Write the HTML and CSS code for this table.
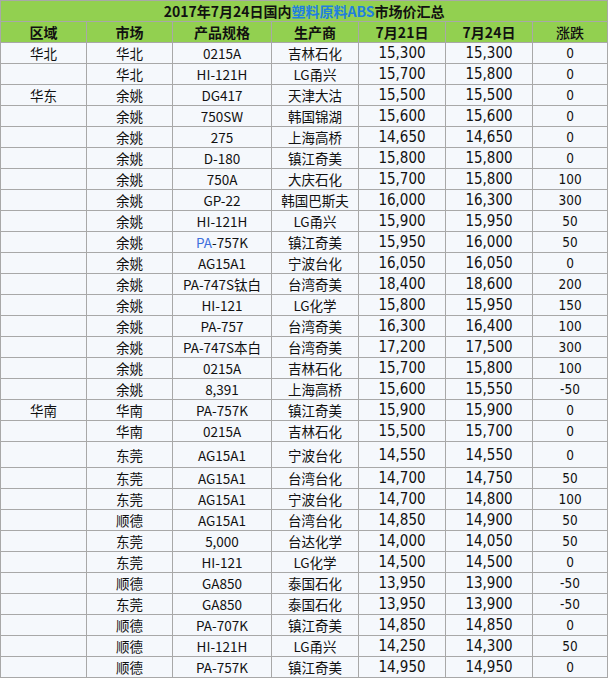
FILE: index.html
```html
<!DOCTYPE html>
<html lang="zh-CN">
<head>
<meta charset="utf-8">
<title>2017年7月24日国内塑料原料ABS市场价汇总</title>
<link rel="stylesheet" href="styles.css">
</head>
<body>
<table class="price-table">
  <colgroup>
    <col class="c-region"><col class="c-market"><col class="c-grade"><col class="c-maker"><col class="c-d1"><col class="c-d2"><col class="c-chg">
  </colgroup>
  <thead>
    <tr class="title-row"><th colspan="7">2017年7月24日国内<span class="hl">塑料原料ABS</span>市场价汇总</th></tr>
    <tr class="head-row"><th>区域</th><th>市场</th><th>产品规格</th><th>生产商</th><th>7月21日</th><th>7月24日</th><th class="light">涨跌</th></tr>
  </thead>
  <tbody>
    <tr><td>华北</td><td>华北</td><td>0215A</td><td>吉林石化</td><td class="num">15,300</td><td class="num">15,300</td><td class="chg">0</td></tr>
    <tr><td></td><td>华北</td><td>HI-121H</td><td>LG甬兴</td><td class="num">15,700</td><td class="num">15,800</td><td class="chg">0</td></tr>
    <tr><td>华东</td><td>余姚</td><td>DG417</td><td>天津大沽</td><td class="num">15,500</td><td class="num">15,500</td><td class="chg">0</td></tr>
    <tr><td></td><td>余姚</td><td>750SW</td><td>韩国锦湖</td><td class="num">15,600</td><td class="num">15,600</td><td class="chg">0</td></tr>
    <tr><td></td><td>余姚</td><td>275</td><td>上海高桥</td><td class="num">14,650</td><td class="num">14,650</td><td class="chg">0</td></tr>
    <tr><td></td><td>余姚</td><td>D-180</td><td>镇江奇美</td><td class="num">15,800</td><td class="num">15,800</td><td class="chg">0</td></tr>
    <tr><td></td><td>余姚</td><td>750A</td><td>大庆石化</td><td class="num">15,700</td><td class="num">15,800</td><td class="chg">100</td></tr>
    <tr><td></td><td>余姚</td><td>GP-22</td><td>韩国巴斯夫</td><td class="num">16,000</td><td class="num">16,300</td><td class="chg">300</td></tr>
    <tr><td></td><td>余姚</td><td>HI-121H</td><td>LG甬兴</td><td class="num">15,900</td><td class="num">15,950</td><td class="chg">50</td></tr>
    <tr><td></td><td>余姚</td><td><span class="link">PA</span>-757K</td><td>镇江奇美</td><td class="num">15,950</td><td class="num">16,000</td><td class="chg">50</td></tr>
    <tr><td></td><td>余姚</td><td>AG15A1</td><td>宁波台化</td><td class="num">16,050</td><td class="num">16,050</td><td class="chg">0</td></tr>
    <tr><td></td><td>余姚</td><td>PA-747S钛白</td><td>台湾奇美</td><td class="num">18,400</td><td class="num">18,600</td><td class="chg">200</td></tr>
    <tr><td></td><td>余姚</td><td>HI-121</td><td>LG化学</td><td class="num">15,800</td><td class="num">15,950</td><td class="chg">150</td></tr>
    <tr><td></td><td>余姚</td><td>PA-757</td><td>台湾奇美</td><td class="num">16,300</td><td class="num">16,400</td><td class="chg">100</td></tr>
    <tr><td></td><td>余姚</td><td>PA-747S本白</td><td>台湾奇美</td><td class="num">17,200</td><td class="num">17,500</td><td class="chg">300</td></tr>
    <tr><td></td><td>余姚</td><td>0215A</td><td>吉林石化</td><td class="num">15,700</td><td class="num">15,800</td><td class="chg">100</td></tr>
    <tr><td></td><td>余姚</td><td>8,391</td><td>上海高桥</td><td class="num">15,600</td><td class="num">15,550</td><td class="chg">-50</td></tr>
    <tr><td>华南</td><td>华南</td><td>PA-757K</td><td>镇江奇美</td><td class="num">15,900</td><td class="num">15,900</td><td class="chg">0</td></tr>
    <tr><td></td><td>华南</td><td>0215A</td><td>吉林石化</td><td class="num">15,500</td><td class="num">15,700</td><td class="chg">0</td></tr>
    <tr class="tall"><td></td><td>东莞</td><td>AG15A1</td><td>宁波台化</td><td class="num low">14,550</td><td class="num low">14,550</td><td class="chg low">0</td></tr>
    <tr><td></td><td>东莞</td><td>AG15A1</td><td>台湾台化</td><td class="num">14,700</td><td class="num">14,750</td><td class="chg">50</td></tr>
    <tr><td></td><td>东莞</td><td>AG15A1</td><td>宁波台化</td><td class="num">14,700</td><td class="num">14,800</td><td class="chg">100</td></tr>
    <tr><td></td><td>顺德</td><td>AG15A1</td><td>台湾台化</td><td class="num">14,850</td><td class="num">14,900</td><td class="chg">50</td></tr>
    <tr><td></td><td>东莞</td><td>5,000</td><td>台达化学</td><td class="num">14,000</td><td class="num">14,050</td><td class="chg">50</td></tr>
    <tr><td></td><td>东莞</td><td>HI-121</td><td>LG化学</td><td class="num">14,500</td><td class="num">14,500</td><td class="chg">0</td></tr>
    <tr><td></td><td>顺德</td><td>GA850</td><td>泰国石化</td><td class="num">13,950</td><td class="num">13,900</td><td class="chg">-50</td></tr>
    <tr><td></td><td>东莞</td><td>GA850</td><td>泰国石化</td><td class="num">13,950</td><td class="num">13,900</td><td class="chg">-50</td></tr>
    <tr><td></td><td>顺德</td><td>PA-707K</td><td>镇江奇美</td><td class="num">14,850</td><td class="num">14,850</td><td class="chg">0</td></tr>
    <tr><td></td><td>顺德</td><td>HI-121H</td><td>LG甬兴</td><td class="num">14,250</td><td class="num">14,300</td><td class="chg">50</td></tr>
    <tr><td></td><td>顺德</td><td>PA-757K</td><td>镇江奇美</td><td class="num">14,950</td><td class="num">14,950</td><td class="chg">0</td></tr>
  </tbody>
</table>
</body>
</html>
```
FILE: styles.css
```css
html, body {
  margin: 0;
  padding: 0;
  background: #ffffff;
}

.price-table {
  border-collapse: collapse;
  table-layout: fixed;
  width: 608px;
  font-family: "DejaVu Sans Condensed", "DejaVu Sans", "Noto Sans CJK SC", sans-serif;
  font-stretch: condensed;
  font-size: 14px;
  color: #111;
  background: #f5f8fc;
}

.c-region { width: 86px; }
.c-market { width: 86px; }
.c-grade  { width: 99px; }
.c-maker  { width: 87px; }
.c-d1     { width: 87px; }
.c-d2     { width: 87px; }
.c-chg    { width: 75px; }

.price-table th,
.price-table td {
  border: 1px solid #a8a8a8;
  padding: 0;
  height: 20px;
  line-height: 18px;
  text-align: center;
  vertical-align: middle;
  white-space: nowrap;
  overflow: hidden;
}

.price-table td {
  font-family: "Noto Sans CJK SC", sans-serif;
  font-size: 13.5px;
}

.price-table td.num,
.price-table td.chg {
  font-family: "DejaVu Sans Condensed", "DejaVu Sans", sans-serif;
  font-size: 15px;
}

.price-table td.chg {
  font-size: 13.5px;
}

.title-row th,
.head-row th {
  background: #92d050;
  font-family: "Noto Sans CJK SC", sans-serif;
  font-size: 14px;
  font-weight: 700;
  color: #111;
}

.head-row th.light {
  font-weight: 500;
}

.hl {
  color: #1f7fe0;
}

.link {
  color: #3d6fdc;
}

.tall td {
  height: 25px;
}

.low {
  padding-top: 4px;
}
```
